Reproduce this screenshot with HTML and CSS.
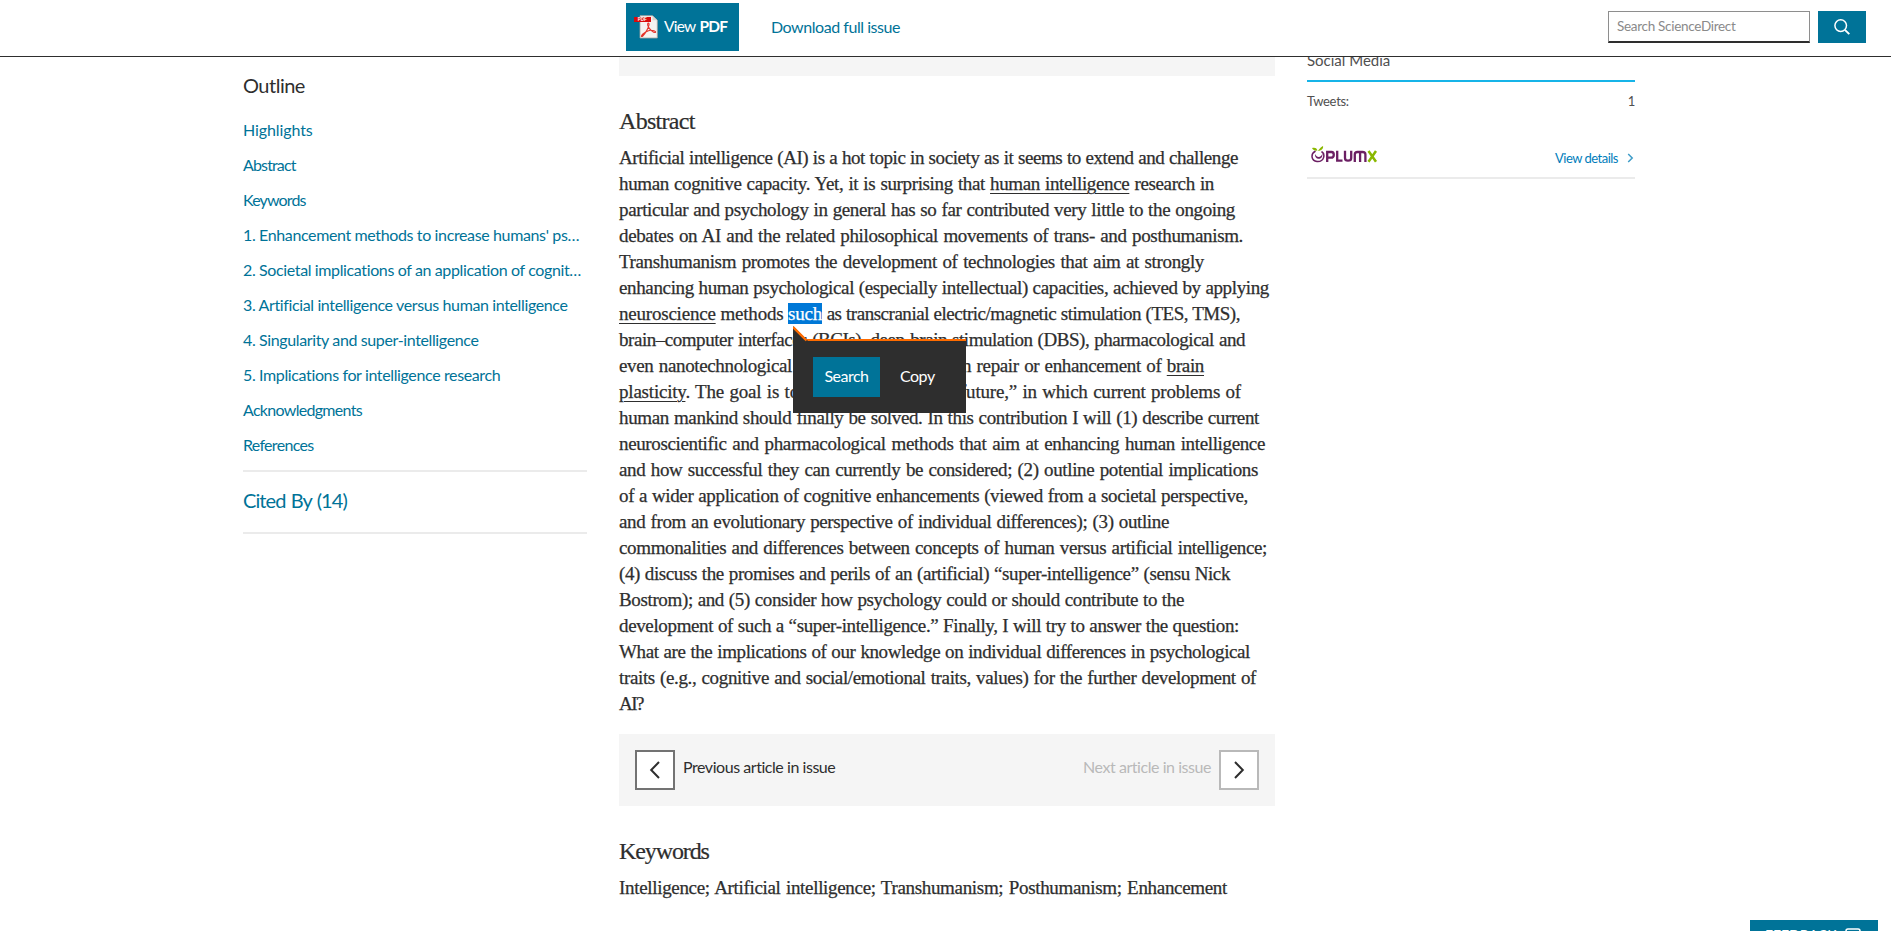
FILE: index.html
```html
<!DOCTYPE html>
<html lang="en">
<head>
<meta charset="utf-8">
<title>Abstract - ScienceDirect</title>
<link rel="stylesheet" href="styles.css">
</head>
<body>
<header class="toolbar">
  <div class="toolbar-actions">
    <a class="pdf-button">
      <svg class="pdf-icon" width="24" height="24" viewBox="0 0 24 24">
        <path d="M6 0.7H18.5L23.3 5.2V23H6Z" fill="#f5f3f1" stroke="#aaa59f" stroke-width=".8"/>
        <path d="M18.5 .7V5.2H23.3Z" fill="#d7d3cf"/>
        <path d="M7.5 21C8.500 18.500 14.500 15 17 15.200C20 15.300 22 16.300 21.500 17.300C20.500 18.500 15 14.500 13.800 10.500C13 7.300 15.500 7.500 15 10C14.500 13 11 19 8.800 21C8 21.800 7.300 21.600 7.500 21Z" fill="none" stroke="#e3342b" stroke-width="1.100"/>
        <rect x="0" y="2" width="17" height="5" fill="#d90b0b"/>
        <text x="3.700" y="6.200" class="pdf-tag">PDF</text>
      </svg>
      <span class="pdf-label">View <b>PDF</b></span>
    </a>
    <a class="issue-link">Download full issue</a>
  </div>
  <form class="search">
    <div class="search-field">Search ScienceDirect</div>
    <div class="search-button">
      <svg width="16" height="16" viewBox="0 0 16 16" fill="none" stroke="#fff" stroke-width="1.500"><circle cx="6.700" cy="6.600" r="5.800"/><path d="M10.900 10.800L15.300 15.200" stroke-width="1.900"/></svg>
    </div>
  </form>
</header>

<main class="page">
  <nav class="outline">
    <h2 class="outline-title">Outline</h2>
    <ul class="outline-list">
      <li><a>Highlights</a></li>
      <li><a>Abstract</a></li>
      <li><a>Keywords</a></li>
      <li><a>1. Enhancement methods to increase humans' ps…</a></li>
      <li><a>2. Societal implications of an application of cognit…</a></li>
      <li><a>3. Artificial intelligence versus human intelligence</a></li>
      <li><a>4. Singularity and super-intelligence</a></li>
      <li><a>5. Implications for intelligence research</a></li>
      <li><a>Acknowledgments</a></li>
      <li><a>References</a></li>
    </ul>
    <a class="cited-by">Cited By (14)</a>
  </nav>

  <article class="article">
    <div class="banner-end"></div>
    <h2 class="section-title">Abstract</h2>
    <p class="abstract">
      <span class="line">Artificial intelligence (AI) is a hot topic in society as it seems to extend and challenge</span>
      <span class="line">human cognitive capacity. Yet, it is surprising that <u>human intelligence</u> research in</span>
      <span class="line">particular and psychology in general has so far contributed very little to the ongoing</span>
      <span class="line">debates on AI and the related philosophical movements of trans- and posthumanism.</span>
      <span class="line">Transhumanism promotes the development of technologies that aim at strongly</span>
      <span class="line">enhancing human psychological (especially intellectual) capacities, achieved by applying</span>
      <span class="line"><span class="lead"><u>neuroscience</u> methods</span> <mark class="selected">such<span class="popup"><svg class="popup-pointer" width="16" height="16" viewBox="0 0 16 16"><path d="M0 0L15 15H0Z" fill="#2e2e2e"/><path d="M0 1L13.500 14.500" stroke="#ff6c00" stroke-width="2.400"/></svg><a class="popup-search">Search</a><a class="popup-copy">Copy</a></span></mark> as transcranial electric/magnetic stimulation (TES, TMS),</span>
      <span class="line">brain–computer interfaces (BCIs), deep-brain stimulation (DBS), pharmacological and</span>
      <span class="line">even nanotechnological interventions that aid in repair or enhancement of <u>brain</u></span>
      <span class="line"><u>plasticity</u>. The goal is to create a new “better future,” in which current problems of</span>
      <span class="line">human mankind should finally be solved. In this contribution I will (1) describe current</span>
      <span class="line">neuroscientific and pharmacological methods that aim at enhancing human intelligence</span>
      <span class="line">and how successful they can currently be considered; (2) outline potential implications</span>
      <span class="line">of a wider application of cognitive enhancements (viewed from a societal perspective,</span>
      <span class="line">and from an evolutionary perspective of individual differences); (3) outline</span>
      <span class="line">commonalities and differences between concepts of human versus artificial intelligence;</span>
      <span class="line">(4) discuss the promises and perils of an (artificial) “super-intelligence” (sensu Nick</span>
      <span class="line">Bostrom); and (5) consider how psychology could or should contribute to the</span>
      <span class="line">development of such a “super-intelligence.” Finally, I will try to answer the question:</span>
      <span class="line">What are the implications of our knowledge on individual differences in psychological</span>
      <span class="line">traits (e.g., cognitive and social/emotional traits, values) for the further development of</span>
      <span class="line">AI?</span>
    </p>
    <div class="issue-nav">
      <a class="nav-item"><span class="nav-box"><svg width="12" height="18" viewBox="0 0 12 18"><path d="M10 1L2.200 9L10 17" /></svg></span>Previous article in issue</a>
      <a class="nav-item nav-disabled">Next article in issue<span class="nav-box"><svg width="12" height="18" viewBox="0 0 12 18"><path d="M2 1L9.800 9L2 17"/></svg></span></a>
    </div>
    <h2 class="section-title keywords-title">Keywords</h2>
    <p class="keywords">Intelligence; Artificial intelligence; Transhumanism; Posthumanism; Enhancement</p>
  </article>

  <aside class="metrics">
    <h3 class="metrics-title">Social Media</h3>
    <div class="metrics-row"><span>Tweets:</span><span>1</span></div>
    <div class="plumx">
      <svg class="plumx-logo" width="67" height="18" viewBox="0 0 67 18" fill="none">
        <path d="M4.500 6C-.8 9 .2 16 6 16.500C13.500 17 14.500 9 10.500 6.500" stroke="#6b1f63" stroke-width="1.500"/>
        <path d="M4 9C3.500 15.500 12.500 15.500 11.300 8.500C10.500 12.500 6 13.500 4 9Z" fill="#6b1f63"/>
        <path d="M7 6C8 5 8.300 3.200 12 1C12.800 4 10 5.500 7 6ZM6.500 5.500C5.500 2.500 3.500 2.500 1 3C2 5.200 4.500 6 6.500 5.500Z" fill="#8ab800"/>
        <g stroke="#6b1f63" stroke-width="2.300">
          <path d="M16.200 17V7H20.500Q22.800 7 22.800 9.700Q22.800 12.700 20 12.700H16.500"/>
          <path d="M26.200 5.800V15.700H31.500"/>
          <path d="M34 5.800V13Q34 15.700 37 15.700Q40.200 15.700 40.200 13V5.800"/>
          <path d="M43.800 17V9.500Q43.800 7 46.500 7H51.500Q54.400 7 54.400 9.500V17M49.100 7V17"/>
        </g>
        <path d="M57.500 6L65 16.800M65 6L57.500 16.800" stroke="#8ab800" stroke-width="2.500"/>
      </svg>
      <a class="details">View details<svg width="7" height="10" viewBox="0 0 7 10"><path d="M1.200 1L5.200 5L1.200 9" fill="none" stroke="#3d9cc8" stroke-width="1.500"/></svg></a>
    </div>
  </aside>
</main>

<div class="feedback"><span>FEEDBACK</span><svg width="16" height="14" viewBox="0 0 16 14"><rect x="1" y="1" width="14" height="11" rx="2" fill="none" stroke="#fff" stroke-width="1.500"/></svg></div>
</body>
</html>
```

FILE: styles.css
```css
* { box-sizing: border-box; }
body {
  margin: 0;
  height: 931px;
  overflow: hidden;
  background: #fff;
  color: #2e2e2e;
  font-family: Lato, "Noto Sans", sans-serif;
  font-size: 16px;
}
h2, h3, p, ul { margin: 0; padding: 0; font-weight: 400; }
ul { list-style: none; }
a { color: #007398; }

.toolbar {
  height: 57px;
  border-bottom: 1px solid #2e2e2e;
  display: flex;
  justify-content: space-between;
  padding: 3px 25px 0 626px;
  background: #fff;
}
.toolbar-actions { display: flex; height: 48px; }
.pdf-button {
  width: 113px;
  height: 48px;
  display: flex;
  align-items: center;
  gap: 6px;
  padding-left: 8px;
  background: #007398;
  color: #fff;
  font-size: 15.500px;
  letter-spacing: -.75px;
  word-spacing: 1px;
  white-space: nowrap;
}
.pdf-label { padding-bottom: 2px; }
.pdf-tag { fill: #fff; font: 700 4.500px "Liberation Sans", sans-serif; letter-spacing: 0; }
.pdf-button b { font-weight: 700; }
.issue-link { margin-left: 32px; line-height: 47px; letter-spacing: -.45px; }
.search { display: flex; gap: 8px; padding-top: 8px; }
.search-field {
  width: 202px;
  height: 32px;
  border: 1px solid #8e8e8e;
  border-bottom: 2px solid #2e2e2e;
  padding-left: 8px;
  line-height: 28px;
  font-size: 13.500px;
  letter-spacing: -.3px;
  color: #8a8a8a;
}
.search-button {
  width: 48px;
  height: 32px;
  background: #007398;
  display: flex;
  align-items: center;
  justify-content: center;
}

.page {
  height: 874px;
  overflow: hidden;
  display: grid;
  grid-template-columns: 344px 656px 328px;
  column-gap: 32px;
  padding-left: 243px;
}

.outline-title { margin-top: 15px; font-size: 20px; line-height: 26px; letter-spacing: -.5px; }
.outline-list { margin-top: 14px; padding-bottom: 8px; border-bottom: 2px solid #ebebeb; }
.outline-list li { height: 35px; line-height: 35px; white-space: nowrap; letter-spacing: -.37px; }
.outline-list li:nth-child(1) { letter-spacing: -.1px; }
.outline-list li:nth-child(2),
.outline-list li:nth-child(3) { letter-spacing: -.85px; }
.outline-list li:nth-child(9),
.outline-list li:nth-child(10) { letter-spacing: -.7px; }
.cited-by {
  display: block;
  height: 62px;
  line-height: 56px;
  font-size: 20px;
  letter-spacing: -.9px;
  word-spacing: 1px;
  border-bottom: 2px solid #ebebeb;
}

.article { font-family: "Liberation Serif", "Noto Serif", serif; }
.banner-end { height: 19px; background: #f5f5f5; }
.section-title { margin-top: 31px; font-size: 24px; line-height: 28px; letter-spacing: -.7px; -webkit-text-stroke: .2px; }
.abstract { margin-top: 10px; font-size: 19px; line-height: 26px; letter-spacing: -.36px; -webkit-text-stroke: .25px; }
.line { display: block; width: 600px; white-space: nowrap; text-align-last: justify; }
.line:nth-child(1) { width: 619px; letter-spacing: -.42px; }
.line:nth-child(2) { width: 595px; }
.line:nth-child(3) { width: 616px; }
.line:nth-child(4) { width: 624px; }
.line:nth-child(5) { width: 585px; }
.line:nth-child(6) { width: 650px; }
.line:nth-child(7) { width: 621px; letter-spacing: -.48px; }
.line:nth-child(8) { width: 626px; letter-spacing: -.46px; }
.line:nth-child(9) { width: 585px; }
.line:nth-child(10) { width: 622px; letter-spacing: -.2px; word-spacing: -1px; }
.line:nth-child(11) { width: 640px; }
.line:nth-child(12) { width: 646px; }
.line:nth-child(13) { width: 639px; }
.line:nth-child(14) { width: 629px; }
.line:nth-child(15) { width: 550px; }
.line:nth-child(16) { width: 648px; }
.line:nth-child(17) { width: 611px; letter-spacing: -.4px; }
.line:nth-child(18) { width: 565px; }
.line:nth-child(19) { width: 620px; }
.line:nth-child(20) { width: 631px; letter-spacing: -.4px; }
.line:nth-child(21) { width: 637px; }
.line:nth-child(22) { width: 24px; letter-spacing: -1.500px; }
.line u { text-underline-offset: 3px; text-decoration-thickness: 1px; }
.lead { letter-spacing: -.21px; }

.selected {
  position: relative;
  background: #0078d7;
  color: #fff;
  letter-spacing: -.2px;
}
.popup {
  position: absolute;
  z-index: 2;
  left: 5px;
  top: 36px;
  width: 173px;
  height: 74px;
  border-top: 2px solid #ff6c00;
  background: #2e2e2e;
  display: flex;
  align-items: flex-start;
  padding: 16px 20px;
  font: 16px/38px Lato, "Noto Sans", sans-serif;
  letter-spacing: -.5px;
  text-align-last: auto;
  -webkit-text-stroke: 0;
}
.popup-pointer { position: absolute; left: 0; top: -15px; }
.popup-search { width: 67px; height: 40px; background: #007398; color: #fff; text-align: center; }
.popup-copy { margin-left: 20px; color: #fff; }

.issue-nav {
  margin-top: 17px;
  height: 72px;
  padding: 16px;
  background: #f5f5f5;
  display: flex;
  justify-content: space-between;
  font: 16px/34px Lato, "Noto Sans", sans-serif;
  letter-spacing: -.45px;
}
.nav-item { display: flex; gap: 8px; color: #2e2e2e; }
.nav-disabled { color: #b9b9b9; }
.nav-box {
  width: 40px;
  height: 40px;
  border: 2px solid #737373;
  background: #fff;
  display: flex;
  align-items: center;
  justify-content: center;
}
.nav-disabled .nav-box { border-color: #b9b9b9; }
.nav-box path { fill: none; stroke: #2e2e2e; stroke-width: 2; }
.keywords-title { margin-top: 31px; letter-spacing: -1.1px; }
.keywords { margin-top: 10px; width: 608px; font-size: 19px; line-height: 26px; letter-spacing: -.32px; white-space: nowrap; text-align-last: justify; -webkit-text-stroke: .25px; }

.metrics { color: #505050; font-size: 13px; }
.metrics-title { height: 25px; font-size: 15px; line-height: 7px; border-bottom: 2px solid #17b4e8; }
.metrics-row { display: flex; justify-content: space-between; line-height: 18px; padding-top: 10px; letter-spacing: -.3px; }
.plumx {
  height: 69px;
  border-bottom: 2px solid #ebebeb;
  display: flex;
  justify-content: space-between;
  align-items: flex-start;
}
.plumx-logo { margin: 35px 0 0 4px; }
.details { margin-top: 39px; line-height: 18px; display: flex; align-items: center; gap: 9px; padding-right: 1px; color: #007dbb; letter-spacing: -.5px; }

.feedback {
  position: absolute;
  left: 1750px;
  top: 920px;
  width: 128px;
  height: 11px;
  padding: 7px 0 0 15px;
  overflow: hidden;
  background: #007398;
  color: #fff;
  display: flex;
  align-items: flex-start;
  gap: 8px;
  font: 14px/16px Lato, sans-serif;
}
.feedback svg { margin-top: 1px; }
```
